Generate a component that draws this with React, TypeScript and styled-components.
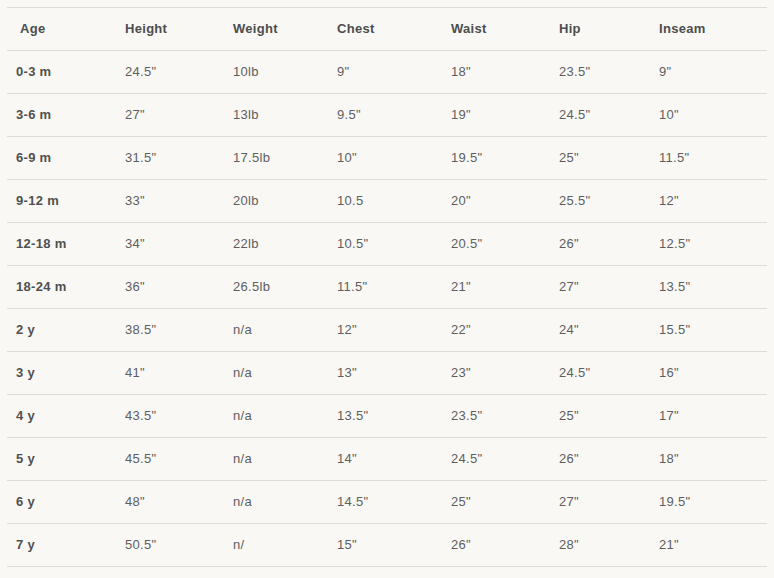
import React from "react";
import styled, { createGlobalStyle } from "styled-components";

const Global = createGlobalStyle`
  html, body { margin: 0; padding: 0; background: #f9f8f5; }
  body { font-family: "Liberation Sans", Arial, sans-serif; }
`;

const Page = styled.div`
  padding: 7px 7px 0 7px;
  width: 760px;
`;

const Table = styled.div`
  display: grid;
  grid-template-columns: 118px 108px 104px 114px 108px 100px 108px;
  border-top: 1px solid #dddbd6;
`;

const Cell = styled.div<{ $head?: boolean; $first?: boolean }>`
  height: 43px;
  box-sizing: border-box;
  padding-bottom: 2px;
  border-bottom: 1px solid #dddbd6;
  display: flex;
  align-items: center;
  padding-left: ${(p) => (p.$first ? (p.$head ? "13px" : "9px") : "0")};
  font-size: 13px;
  font-weight: ${(p) => (p.$head || p.$first ? 700 : 400)};
  color: ${(p) => (p.$head ? "#4d4d4d" : p.$first ? "#505050" : "#5e5e5e")};
  letter-spacing: 0.3px;
`;

const headers = ["Age", "Height", "Weight", "Chest", "Waist", "Hip", "Inseam"];
const rows: string[][] = [
  ["0-3 m", '24.5"', "10lb", '9"', '18"', '23.5"', '9"'],
  ["3-6 m", '27"', "13lb", '9.5"', '19"', '24.5"', '10"'],
  ["6-9 m", '31.5"', "17.5lb", '10"', '19.5"', '25"', '11.5"'],
  ["9-12 m", '33"', "20lb", "10.5", '20"', '25.5"', '12"'],
  ["12-18 m", '34"', "22lb", '10.5"', '20.5"', '26"', '12.5"'],
  ["18-24 m", '36"', "26.5lb", '11.5"', '21"', '27"', '13.5"'],
  ["2 y", '38.5"', "n/a", '12"', '22"', '24"', '15.5"'],
  ["3 y", '41"', "n/a", '13"', '23"', '24.5"', '16"'],
  ["4 y", '43.5"', "n/a", '13.5"', '23.5"', '25"', '17"'],
  ["5 y", '45.5"', "n/a", '14"', '24.5"', '26"', '18"'],
  ["6 y", '48"', "n/a", '14.5"', '25"', '27"', '19.5"'],
  ["7 y", '50.5"', "n/", '15"', '26"', '28"', '21"'],
];

export default function App() {
  return (
    <>
      <Global />
      <Page>
        <Table>
          {headers.map((h, i) => (
            <Cell key={h} $head $first={i === 0}>
              {h}
            </Cell>
          ))}
          {rows.map((r, ri) =>
            r.map((c, ci) => (
              <Cell key={`${ri}-${ci}`} $first={ci === 0}>
                {c}
              </Cell>
            ))
          )}
        </Table>
      </Page>
    </>
  );
}
